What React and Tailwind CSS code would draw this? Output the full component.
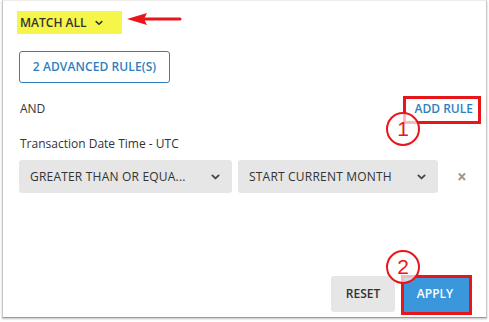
import React from 'react';

const Chevron = ({ className = '' }) => (
  <svg viewBox="0 0 10 6" className={className} fill="none" stroke="currentColor" strokeWidth="2" strokeLinecap="round" strokeLinejoin="round">
    <path d="M1.5 1.2 5 4.6l3.5-3.4" />
  </svg>
);

const Callout = ({ n, className }) => (
  <div className={`absolute w-[34px] h-[34px] rounded-full border-2 border-[#e8151b] bg-white/70 flex items-center justify-center text-[#e8151b] text-[21px] ${className}`} style={{ fontFamily: 'Arial, "Liberation Sans", sans-serif' }}>
    {n}
  </div>
);

const Select = ({ label, width }) => (
  <div className={`${width} h-[33px] bg-[#e6e6e6] rounded-[3px] flex items-center justify-between pl-[11px] pr-[12px] text-[12px] text-[#333] font-medium tracking-[0.2px]`}>
    <span>{label}</span>
    <Chevron className="w-[9px] h-[6px] text-[#444]" />
  </div>
);

export default function App() {
  return (
    <div className="w-[489px] h-[322px] bg-white relative overflow-hidden" style={{ fontFamily: '"Open Sans", "Noto Sans", sans-serif' }}>
      {/* Panel */}
      <div className="ml-[2px] w-[485px] h-[318px] border-x border-b border-t border-t-[#ececec] border-x-[#c8c8c8] border-b-[#9a9a9a] shadow-[0_1px_2px_rgba(0,0,0,0.25)] flex flex-col pl-[16px] pr-[16px]">
        {/* Match all */}
        <div className="mt-[10px] -ml-[2px] w-[105px] h-[23px] bg-[#f6f64a] flex items-center pl-[3px] gap-[8px] text-[12px] font-semibold text-[#333]">
          <span>MATCH ALL</span>
          <Chevron className="w-[8px] h-[6px] text-[#333]" />
        </div>

        {/* Advanced rules */}
        <button className="mt-[17px] w-[151px] h-[32px] border border-[#2f7fc0] rounded-[3px] text-[#2f7fc0] text-[12px] font-semibold tracking-[0.1px] flex items-center justify-center">
          2 ADVANCED RULE(S)
        </button>

        {/* AND / Add rule */}
        <div className="mt-[18px] flex items-center justify-between text-[12px] h-[16px]">
          <span className="ml-[1px] text-[#333] font-medium">AND</span>
          <span className="-mr-[3px] text-[#2f7fc0] font-semibold">ADD RULE</span>
        </div>

        <div className="mt-[19px] ml-[1px] text-[12px] text-[#333] h-[16px] flex items-center">Transaction Date Time - UTC</div>

        {/* Selects */}
        <div className="mt-[8px] flex items-center gap-[6px]">
          <Select label="GREATER THAN OR EQUA..." width="w-[213px]" />
          <Select label="START CURRENT MONTH" width="w-[200px]" />
          <span className="ml-[13px] text-[#999] text-[17px] font-bold leading-none">×</span>
        </div>

        {/* Footer */}
        <div className="mt-auto mb-[5px] flex justify-end gap-[6px] pr-[1px]">
          <button className="w-[64px] h-[36px] bg-[#e6e6e6] rounded-[3px] text-[12px] font-semibold text-[#333]">RESET</button>
          <button className="w-[68px] h-[36px] bg-[#3a97dc] text-[12px] font-semibold text-white">APPLY</button>
        </div>
      </div>

      {/* Annotations */}
      <svg className="absolute left-[125px] top-[12px] w-[58px] h-[14px]" viewBox="0 0 58 14">
        <path d="M18 7 H55" stroke="#e8151b" strokeWidth="3" strokeLinecap="round" />
        <path d="M2 7 L22 1 L19 7 L22 13 Z" fill="#e8151b" />
      </svg>
      <div className="absolute left-[403px] top-[96px] w-[78px] h-[28px] border-[3px] border-[#e8151b]" />
      <Callout n="1" className="left-[386px] top-[112px]" />
      <div className="absolute left-[401px] top-[275px] w-[71px] h-[40px] border-[3px] border-[#e8151b]" />
      <Callout n="2" className="left-[386px] top-[250px]" />
    </div>
  );
}
